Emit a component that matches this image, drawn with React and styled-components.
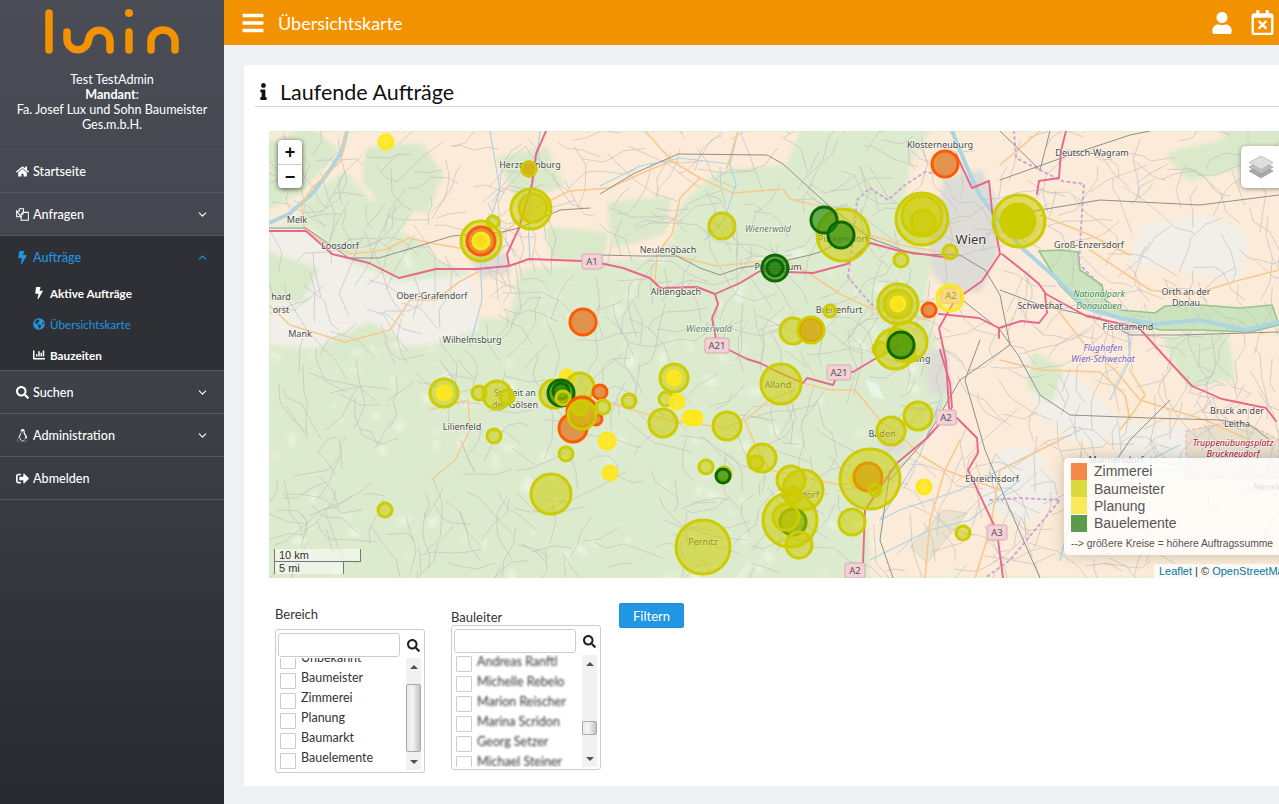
import React from "react";
import styled, { createGlobalStyle } from "styled-components";
import {
  FaHome,
  FaBolt,
  FaGlobeAmericas,
  FaChartBar,
  FaSearch,
  FaLinux,
  FaSignOutAlt,
  FaBars,
  FaUser,
  FaRegCalendarTimes,
  FaInfo,
} from "react-icons/fa";
import { ChevronDown, ChevronUp } from "lucide-react";

const GlobalStyle = createGlobalStyle`
  html, body {
    margin: 0;
    height: 100%;
    overflow: hidden;
    font-family: Lato, "Open Sans", sans-serif;
    color: #333;
  }
  * { box-sizing: border-box; }
`;

const Page = styled.div`
  display: grid;
  grid-template-columns: 224px 1fr;
  width: 1279px;
  height: 804px;
  overflow: hidden;
  background: #eef0f4;
`;

const Sidebar = styled.aside`
  background: linear-gradient(#4a4d55 0, #44474f 230px, #3c3e45 440px, #28292e 804px);
  color: #fff;
  font-size: 12.6px;
`;

const Brand = styled.div`
  height: 150px;
  padding-top: 7px;
  text-align: center;
  line-height: 15px;
  border-bottom: 1px solid #50535b;
  svg {
    display: block;
    margin: 0 auto 17px;
  }
  strong {
    font-weight: 700;
  }
`;

const NavRow = styled.div`
  display: flex;
  align-items: center;
  height: ${(p) => (p.$active ? 41 : 43)}px;
  padding: ${(p) => (p.$active ? "1px" : "0")} 16px 0;
  gap: 4px;
  color: ${(p) => (p.$active ? "#2196e3" : "#fff")};
  background: ${(p) => (p.$active ? "#2e3036" : "transparent")};
  border-bottom: ${(p) => (p.$active ? "0" : "1px solid #55575e")};
  font-weight: 500;
  > svg:first-child {
    width: 13px;
    height: 13px;
    flex: none;
  }
  span {
    flex: 1;
  }
`;

const Arrow = styled.div`
  display: flex;
  margin-right: -1px;
`;

const SubMenu = styled.div`
  background: #2e3036;
  border-bottom: 1px solid #55575e;
`;

const SubRow = styled.div`
  display: flex;
  align-items: center;
  height: 31px;
  padding-left: 33px;
  gap: 5px;
  font-size: 11.7px;
  color: ${(p) => (p.$active ? "#2196e3" : "#fff")};
  font-weight: ${(p) => (p.$active ? 400 : 700)};
  svg {
    width: 12px;
    height: 12px;
    flex: none;
  }
`;

const Content = styled.main`
  min-width: 0;
`;

const TopBar = styled.header`
  display: flex;
  align-items: center;
  height: 45px;
  padding: 0 4px 0 17px;
  background: #f39200;
  color: #fff;
  h1 {
    flex: 1;
    margin: 0 0 0 13px;
    font-size: 18px;
    font-weight: 400;
  }
`;

const TopIcons = styled.div`
  display: flex;
  align-items: center;
  gap: 17px;
`;

const Card = styled.section`
  width: 1100px;
  height: 721px;
  margin: 20px 0 0 20px;
  padding: 13px 0 0 0;
  background: #fff;
`;

const CardTitle = styled.div`
  display: flex;
  align-items: center;
  height: 29px;
  margin-left: 11px;
  border-bottom: 1px solid #d4d4d4;
  padding-bottom: 1px;
  h2 {
    margin: 0 0 0 8px;
    font-size: 21.5px;
    line-height: 28px;
    font-weight: 400;
    color: #111;
  }
`;

const MapBox = styled.div`
  position: relative;
  width: 1040px;
  height: 447px;
  margin: 24px 0 0 25px;
  overflow: hidden;
  background: #dcebcd;
  > svg {
    display: block;
  }
`;

const ZoomControl = styled.div`
  position: absolute;
  left: 9px;
  top: 9px;
  width: 24px;
  background: #fff;
  border-radius: 4px;
  box-shadow: 0 1px 5px rgba(0, 0, 0, 0.65);
`;

const ZoomButton = styled.div`
  height: 24px;
  text-align: center;
  font: 700 18px/24px "Liberation Sans", sans-serif;
  color: #111;
  & + & {
    border-top: 1px solid #ccc;
  }
`;

const LayersButton = styled.div`
  position: absolute;
  left: 972px;
  top: 15px;
  display: flex;
  align-items: center;
  width: 48px;
  height: 42px;
  padding-left: 7px;
  background: #fff;
  border-radius: 5px;
  box-shadow: 0 1px 5px rgba(0, 0, 0, 0.4);
`;

const Legend = styled.div`
  position: absolute;
  left: 795px;
  top: 327px;
  width: 240px;
  height: 97px;
  padding: 4.5px 7px;
  background: rgba(255, 255, 255, 0.8);
  border-radius: 5px;
  box-shadow: 0 0 15px rgba(0, 0, 0, 0.2);
  font-family: "Liberation Sans", Arial, sans-serif;
  color: #555;
`;

const LegendRow = styled.div`
  display: flex;
  align-items: center;
  height: 17.4px;
  font-size: 14px;
  i {
    width: 16px;
    height: 17px;
    margin-right: 7px;
    background: ${(p) => p.$color};
  }
`;

const LegendNote = styled.div`
  margin-top: 4px;
  font-size: 10.3px;
  line-height: 16px;
  white-space: nowrap;
`;

const Attribution = styled.div`
  position: absolute;
  left: 885px;
  bottom: 0;
  padding: 0 5px;
  font: 11px/14px "Liberation Sans", Arial, sans-serif;
  color: #333;
  background: rgba(255, 255, 255, 0.7);
  white-space: nowrap;
  b {
    font-weight: 400;
    color: #0078a8;
  }
`;

const ScaleStack = styled.div`
  position: absolute;
  left: 5px;
  bottom: 4px;
`;

const ScaleLine = styled.div`
  width: ${(p) => p.$width}px;
  height: 13px;
  padding-left: 4px;
  font: 11px/12px "Liberation Sans", Arial, sans-serif;
  color: #333;
  background: rgba(255, 255, 255, 0.5);
  border: 1px solid #777;
  border-top: ${(p) => (p.$flip ? "1px solid #777" : "0")};
  border-bottom: ${(p) => (p.$flip ? "0" : "1px solid #777")};
  margin-top: ${(p) => (p.$flip ? "-1px" : "0")};
`;

const Filters = styled.div`
  display: flex;
  align-items: flex-start;
  margin: 25px 0 0 31px;
`;

const FilterColumn = styled.div`
  width: 150px;
  margin-right: ${(p) => p.$gap}px;
  padding-top: ${(p) => p.$top}px;
  label {
    display: block;
    height: 18px;
    margin-bottom: ${(p) => p.$labelGap}px;
    font-size: 13px;
    line-height: 18px;
    color: #333;
  }
`;

const PickBox = styled.div`
  height: ${(p) => p.$height}px;
  border: 1px solid #ccc;
  border-radius: 3px;
  padding: 3px 3px 0 2px;
  overflow: hidden;
`;

const SearchRow = styled.div`
  display: flex;
  align-items: center;
  height: 24px;
  margin-right: 1px;
  gap: 7px;
  color: #222;
  svg {
    width: 13px;
    height: 13px;
    flex: none;
  }
`;

const SearchInput = styled.div`
  flex: 1;
  height: 24px;
  border: 1px solid #ccc;
  border-radius: 3px;
`;

const ListArea = styled.div`
  display: flex;
  height: 112px;
  margin-top: ${(p) => p.$top}px;
`;

const ItemClip = styled.div`
  flex: 1;
  overflow: hidden;
  padding-left: 2px;
`;

const Items = styled.div`
  margin-top: ${(p) => p.$offset}px;
`;

const Item = styled.div`
  display: flex;
  align-items: center;
  height: 20px;
  font-size: 12.5px;
  color: #333;
  span {
    margin-left: 5px;
    margin-bottom: 6px;
    filter: ${(p) => (p.$blur ? "blur(1px)" : "none")};
    white-space: nowrap;
  }
  i {
    width: 16px;
    height: 16px;
    flex: none;
    border: 1px solid #ccc;
    border-radius: 1px;
    background: #fff;
  }
`;

const ScrollTrack = styled.div`
  display: flex;
  flex-direction: column;
  width: 15px;
  background: #f1f1f1;
  font-size: 0;
`;

const ScrollEnd = styled.div`
  height: 17px;
  display: flex;
  align-items: center;
  justify-content: center;
  flex: none;
  &::before {
    content: "";
    border-left: 4px solid transparent;
    border-right: 4px solid transparent;
    border-${(p) => (p.$down ? "top" : "bottom")}: 4px solid #505050;
  }
`;

const ScrollGap = styled.div`
  flex: ${(p) => (p.$fill ? 1 : "none")};
  height: ${(p) => (p.$fill ? "auto" : `${p.$height}px`)};
`;

const ScrollThumb = styled.div`
  flex: none;
  height: ${(p) => p.$height}px;
  border: 1px solid #a8a8a8;
  border-radius: 2px;
  background: linear-gradient(90deg, #e8e8e8, #f4f4f4 40%, #c4c4c4);
`;

const FilterButton = styled.button`
  width: 65px;
  height: 25px;
  padding: 0;
  border: 1px solid #1e8ed8;
  border-radius: 2px;
  background: #2196e3;
  color: #fff;
  font: 400 13px Lato, sans-serif;
`;

// map drawing, all coordinates are page pixels (viewBox starts at the map corner)
const line = (pts) => "M" + pts.map((p) => p.join(" ")).join("L");

const FARMLAND = [
  [[352, 131], [800, 131], [786, 165], [720, 170], [700, 186], [680, 205], [672, 240], [650, 258], [600, 262], [520, 270], [509, 318], [476, 318], [470, 272], [440, 262], [420, 240], [400, 232], [420, 200], [370, 200], [345, 170]],
  [[930, 131], [1310, 131], [1310, 578], [870, 578], [868, 520], [900, 470], [950, 400], [935, 340], [925, 300], [932, 260], [905, 200], [910, 165]],
  [[269, 131], [352, 131], [345, 170], [312, 195], [296, 220], [269, 226]],
];

const GREYLAND = [
  [[269, 226], [310, 228], [350, 262], [400, 282], [470, 274], [480, 330], [430, 345], [340, 350], [269, 345]],
  [[1140, 225], [1210, 215], [1250, 235], [1240, 285], [1180, 270], [1130, 265]],
  [[1000, 445], [1040, 450], [1060, 500], [1020, 525], [980, 500]],
  [[1020, 355], [1080, 380], [1120, 420], [1100, 450], [1040, 420]],
  [[1110, 420], [1200, 430], [1180, 480], [1120, 470]],
];

const URBAN = [
  [[945, 180], [980, 172], [1000, 210], [995, 255], [980, 290], [952, 292], [935, 275], [930, 240], [940, 210]],
  [[925, 355], [945, 350], [950, 392], [932, 392]],
  [[472, 258], [505, 254], [508, 272], [482, 276]],
  [[880, 440], [905, 442], [900, 452], [884, 450]],
  [[1120, 322], [1135, 322], [1135, 332], [1120, 332]],
];

const FORESTS = [
  [[369, 150], [420, 146], [440, 175], [425, 210], [385, 205], [365, 180]],
  [[270, 145], [310, 131], [335, 150], [300, 190], [272, 205]],
  [[500, 160], [545, 150], [560, 185], [520, 200]],
  [[548, 230], [605, 235], [600, 262], [555, 256]],
  [[610, 205], [668, 200], [662, 232], [615, 245]],
  [[1170, 155], [1235, 140], [1240, 165], [1190, 178]],
  [[1166, 340], [1225, 335], [1232, 375], [1190, 385]],
  [[1035, 355], [1060, 370], [1050, 400], [1030, 385]],
  [[1225, 131], [1279, 131], [1279, 160], [1240, 165]],
  [[270, 255], [315, 270], [300, 300], [269, 296]],
  [[320, 350], [369, 325], [395, 340], [345, 356]],
];

const WATER = [
  { w: 4, d: [[952, 131], [966, 165], [979, 194], [1002, 225], [1022, 248], [1056, 278], [1086, 308], [1120, 318], [1156, 324], [1199, 320], [1246, 330], [1279, 322]] },
  { w: 4, d: [[269, 223], [289, 214], [312, 194], [330, 170], [342, 151], [347, 131]] },
  { w: 1.2, d: [[600, 186], [640, 166], [680, 158], [730, 164], [738, 131]] },
  { w: 1.2, d: [[730, 164], [736, 185], [724, 220], [705, 240]] },
  { w: 1.2, d: [[490, 131], [500, 190], [480, 250], [482, 300], [470, 345]] },
  { w: 1.2, d: [[540, 131], [528, 220], [530, 262]] },
  { w: 1.2, d: [[940, 400], [920, 455], [880, 520], [900, 510], [960, 490], [1020, 460], [1080, 430]] },
  { w: 1.2, d: [[1060, 560], [1070, 520], [1130, 470], [1180, 445]] },
  { w: 1.2, d: [[870, 560], [930, 530], [970, 520], [1020, 480]] },
  { w: 1.2, d: [[1110, 400], [1130, 360], [1128, 335]] },
];

const ORANGE_ROADS = [
  [[346, 131], [341, 161], [312, 188], [302, 204], [304, 228], [326, 244], [352, 254], [385, 250], [409, 238], [436, 244], [459, 248], [502, 234], [535, 208], [569, 191], [609, 188], [647, 171], [672, 161], [700, 178], [733, 193], [783, 189], [790, 199], [827, 208], [860, 232], [905, 246], [960, 255]],
  [[700, 178], [680, 198], [672, 234], [657, 254], [655, 281], [660, 290]],
  [[677, 256], [717, 266], [783, 259], [810, 274], [840, 294], [870, 308], [925, 320]],
  [[727, 168], [738, 131]],
  [[645, 131], [672, 161]],
  [[436, 300], [459, 282], [478, 272]],
  [[269, 305], [290, 325], [345, 342], [390, 330], [410, 300], [436, 300]],
  [[430, 410], [468, 400], [470, 430], [455, 460], [431, 480]],
  [[795, 390], [770, 400], [745, 420], [755, 445], [770, 470], [840, 485], [870, 480]],
  [[803, 383], [830, 390], [855, 390], [880, 420], [905, 440], [920, 455], [945, 470], [1000, 490]],
  [[600, 400], [660, 418], [725, 428], [745, 420]],
  [[1050, 300], [1085, 345], [1115, 370], [1140, 400], [1205, 420], [1250, 440]],
  [[1090, 250], [1150, 290], [1190, 295], [1240, 280], [1279, 270]],
  [[1000, 165], [1040, 131]],
  [[1040, 215], [1090, 235], [1130, 255]],
  [[1000, 360], [1040, 370], [1100, 372], [1125, 395], [1130, 420]],
  [[960, 440], [945, 470], [930, 520], [925, 578]],
  [[1060, 440], [1000, 470], [990, 530], [975, 578]],
  [[1130, 370], [1145, 395], [1135, 410], [1120, 430]],
];

const MOTORWAYS = [
  [[269, 231], [306, 231], [332, 254], [369, 263], [399, 278], [436, 269], [476, 269], [509, 266], [529, 259], [582, 261], [600, 263], [623, 268], [650, 278], [660, 288], [697, 287], [715, 294], [740, 283], [760, 271], [813, 273], [847, 264], [870, 243], [900, 251], [950, 258]],
  [[715, 294], [718, 304], [712, 318], [717, 344], [747, 359], [760, 363], [780, 373], [803, 383], [807, 378], [833, 385], [839, 372], [853, 372], [873, 360], [900, 345]],
  [[940, 350], [950, 383], [952, 407], [946, 417], [927, 438], [897, 463], [865, 510], [863, 563], [855, 570]],
  [[957, 418], [977, 438], [978, 453], [968, 470], [993, 523], [997, 532], [1003, 578]],
  [[1002, 254], [1026, 273], [1039, 284], [1046, 294], [1086, 316], [1139, 328], [1166, 358], [1192, 386], [1222, 399], [1266, 408], [1276, 421]],
  [[939, 314], [979, 318], [999, 328], [999, 338]],
  [[999, 328], [1021, 321], [1039, 323], [1047, 313], [1045, 294]],
  [[1066, 131], [1061, 151], [1059, 178], [1039, 181], [1037, 194]],
  [[956, 154], [972, 188], [989, 181], [992, 211], [1000, 254], [982, 281], [955, 300], [939, 328], [946, 361], [949, 408]],
  [[546, 131], [536, 154], [532, 184], [519, 228], [507, 254], [509, 266]],
];

const RAILWAYS = [
  [[269, 228], [306, 228], [349, 258], [379, 258], [452, 236], [502, 232], [519, 228], [560, 210], [590, 208]],
  [[600, 194], [633, 174], [678, 154], [767, 155], [783, 164], [827, 204], [870, 238], [913, 254], [960, 255], [985, 270]],
  [[600, 255], [640, 256], [677, 256], [700, 268], [720, 275], [740, 268], [780, 262], [810, 255], [820, 252], [850, 237]],
  [[1010, 215], [1100, 200], [1200, 205], [1279, 195]],
  [[1000, 180], [1070, 155], [1130, 135], [1150, 131]],
  [[1000, 290], [1040, 305], [1100, 318], [1130, 335], [1180, 335], [1279, 332]],
  [[950, 290], [1000, 330], [1018, 355], [1040, 395], [1070, 415], [1150, 418], [1220, 420], [1250, 425], [1270, 440]],
  [[985, 270], [1000, 295], [1010, 345], [960, 380], [925, 440], [890, 480]],
  [[1000, 131], [1040, 170], [1050, 131]],
  [[980, 340], [965, 380], [985, 450], [1010, 510], [1040, 578]],
  [[890, 470], [880, 540], [893, 578]],
  [[1170, 400], [1130, 440], [1110, 470]],
];

const BORDERS = [
  [[848, 277], [870, 303], [880, 310]],
  [[848, 277], [853, 240], [857, 200], [870, 188], [888, 200], [905, 185], [925, 172], [950, 175]],
  [[1014, 131], [1016, 158], [1062, 181], [1084, 184], [1082, 211], [1079, 264], [1100, 285]],
  [[990, 500], [1020, 498], [1060, 500], [1010, 560], [985, 578]],
];

const PARK = [[1039, 251], [1060, 250], [1078, 252], [1080, 270], [1102, 285], [1105, 300], [1120, 310], [1155, 313], [1165, 306], [1200, 305], [1240, 308], [1272, 305], [1279, 325], [1250, 332], [1200, 330], [1160, 330], [1120, 318], [1080, 305], [1060, 285]];

const seeded = (seed) => () => {
  seed = (seed * 16807) % 2147483647;
  return seed / 2147483647;
};

// little village roads: the real tiles have hundreds, a random walk looks close enough
const minorRoads = (() => {
  const rnd = seeded(4711);
  const out = [];
  for (let i = 0; i < 720; i++) {
    let x = 269 + rnd() * 1010;
    let y = 131 + rnd() * 447;
    let dir = rnd() * Math.PI * 2;
    const pts = [[x, y]];
    const steps = 2 + Math.floor(rnd() * 3);
    for (let s = 0; s < steps; s++) {
      dir += (rnd() - 0.5) * 1.6;
      const len = 8 + rnd() * 18;
      x += Math.cos(dir) * len;
      y += Math.sin(dir) * len;
      pts.push([Math.round(x), Math.round(y)]);
    }
    out.push(pts);
  }
  return out;
})();

const blobs = (() => {
  const rnd = seeded(90210);
  return Array.from({ length: 170 }, () => ({
    x: 269 + rnd() * 700,
    y: 250 + rnd() * 328,
    rx: 2 + rnd() * 7,
    ry: 1 + rnd() * 3,
    a: rnd() * 180,
  }));
})();

const LABELS = [
  ["Klosterneuburg", 940, 148], ["Deutsch-Wagram", 1092, 156], ["Herzogenburg", 530, 168], ["Melk", 297, 223],
  ["Loosdorf", 340, 249], ["Ober-Grafendorf", 432, 299], ["hard", 281, 300], ["orst", 281, 313], ["Mank", 300, 337],
  ["Wilhelmsburg", 472, 343], ["Neulengbach", 668, 253], ["Altlengbach", 676, 295], ["Purkersdorf", 843, 242],
  ["Pressbaum", 778, 270], ["Breitenfurt", 839, 313], ["Groß-Enzersdorf", 1089, 248], ["Schwechat", 1040, 309],
  ["Orth an der", 1186, 295], ["Donau", 1186, 306], ["Fischamend", 1128, 330], ["Bruck an der", 1237, 414],
  ["Leitha", 1237, 427], ["Alland", 778, 388], ["Baden", 882, 437], ["Mödling", 913, 362], ["Pernitz", 703, 545],
  ["Ebreichsdorf", 992, 482], ["Berndorf", 800, 498], ["Lilienfeld", 462, 430], ["St. Veit an", 515, 396],
  ["der Gölsen", 515, 408], ["Mannersdorf", 1116, 463], ["Neusiedl", 1272, 490],
];

const AREA_LABELS = [
  ["Wienerwald", 768, 232, "#5f7f62"], ["Wienerwald", 709, 332, "#5f7f62"],
  ["Nationalpark", 1099, 297, "#3d8a4a"], ["Donauauen", 1099, 309, "#3d8a4a"],
  ["Flughafen", 1103, 351, "#7a5bb8"], ["Wien-Schwechat", 1103, 362, "#7a5bb8"],
  ["Truppenübungsplatz", 1233, 446, "#a8123c"], ["Bruckneudorf", 1233, 457, "#a8123c"],
];

const SHIELDS = [
  ["A1", 592, 261], ["A21", 717, 345], ["A21", 839, 372], ["A2", 951, 295],
  ["A2", 946, 417], ["A2", 855, 570], ["A3", 997, 532],
];

const COLORS = {
  Z: { stroke: "#ff5a00", fill: "#e08a3e", o: 0.9 },
  B: { stroke: "#cccc00", fill: "#cccc00", o: 0.55 },
  P: { stroke: "#ffe81a", fill: "#ffe81a", o: 0.85 },
  Q: { stroke: "#ffe81a", fill: "#ffe81a", o: 0.45 },
  E: { stroke: "#0c6a00", fill: "#148000", o: 0.6 },
  S: { stroke: "#cccc00", fill: "#cccc00", o: 1 },
};

const MARKERS = [
  [386, 142, 7, "P"], [529, 169, 7, "Z"], [529, 169, 7, "B"], [531, 209, 20, "B"], [533, 208, 14, "B"],
  [493, 222, 6, "B"], [481, 241, 20, "B"], [481, 241, 14, "Z"], [481, 241, 8, "P"],
  [583, 322, 13, "Z"], [722, 226, 13, "B"], [945, 164, 13, "Z"],
  [843, 235, 26, "B"], [824, 220, 13, "E"], [841, 235, 13, "E"],
  [922, 219, 26, "B"], [922, 216, 20, "B"], [923, 222, 12, "B"],
  [1019, 221, 26, "B"], [1018, 221, 17, "S"], [901, 260, 7, "B"], [950, 252, 7, "B"],
  [775, 268, 13, "E"], [775, 268, 8, "E"], [898, 304, 20, "B"], [898, 304, 14, "B"], [898, 304, 7, "P"],
  [950, 298, 13, "Q"], [929, 310, 7, "Z"], [830, 311, 6, "B"],
  [793, 331, 13, "B"], [811, 330, 12, "Z"], [811, 330, 13, "B"],
  [907, 342, 20, "B"], [895, 349, 20, "B"], [880, 349, 7, "B"], [901, 345, 13, "E"],
  [781, 384, 20, "B"], [444, 393, 14, "B"], [444, 393, 7, "P"],
  [479, 393, 7, "B"], [497, 395, 14, "B"], [507, 397, 7, "B"],
  [567, 377, 7, "P"], [580, 387, 14, "B"], [554, 394, 14, "B"], [561, 393, 13, "E"], [561, 391, 8, "E"], [563, 398, 7, "B"],
  [600, 392, 7, "Z"], [596, 419, 6, "Z"], [573, 428, 14, "Z"], [582, 412, 15, "Z"], [582, 415, 14, "B"], [580, 408, 7, "B"],
  [603, 407, 7, "B"], [629, 401, 7, "B"], [607, 441, 8, "P"], [566, 454, 7, "B"], [494, 436, 7, "B"], [610, 473, 7, "P"],
  [551, 494, 20, "B"], [385, 510, 7, "B"],
  [674, 378, 14, "B"], [674, 378, 7, "P"], [666, 399, 7, "B"], [677, 402, 7, "P"], [663, 423, 14, "B"],
  [690, 418, 7, "P"], [695, 418, 7, "P"], [727, 426, 14, "B"], [918, 416, 14, "B"], [891, 431, 14, "B"],
  [762, 458, 14, "B"], [756, 463, 7, "B"], [706, 467, 7, "B"], [724, 474, 7, "B"], [723, 476, 7, "E"],
  [858, 479, 7, "P"], [868, 477, 14, "Z"], [870, 479, 30, "B"], [875, 490, 6, "B"],
  [924, 487, 7, "P"], [791, 480, 14, "B"], [803, 490, 20, "B"], [793, 495, 8, "B"],
  [793, 522, 13, "E"], [790, 520, 27, "B"], [786, 517, 13, "B"], [799, 545, 13, "B"], [852, 522, 13, "B"],
  [963, 533, 7, "B"], [703, 547, 27, "B"],
];

const MapSvg = () => (
  <svg width="1040" height="447" viewBox="269 131 1040 447">
    <defs>
      <filter id="soft" x="-5%" y="-5%" width="110%" height="110%">
        <feGaussianBlur stdDeviation="2" />
      </filter>
      <filter id="tile" x="-2%" y="-2%" width="104%" height="104%">
        <feGaussianBlur stdDeviation="0.35" />
      </filter>
    </defs>
    <rect x="269" y="131" width="1040" height="447" fill="#dcebcd" />
    <g filter="url(#soft)">
      {FARMLAND.map((p, i) => <path key={i} d={line(p) + "Z"} fill="#fcebd8" />)}
      {GREYLAND.map((p, i) => <path key={i} d={line(p) + "Z"} fill="#f1efe8" />)}
      {FORESTS.map((p, i) => <path key={i} d={line(p) + "Z"} fill="#d9e9c9" stroke="#d9e9c9" strokeWidth="6" strokeLinejoin="round" />)}
      {blobs.map((b, i) => (
        <ellipse key={i} cx={b.x} cy={b.y} rx={b.rx} ry={b.ry} fill="#edf4e2" transform={`rotate(${b.a} ${b.x} ${b.y})`} />
      ))}
      {URBAN.map((p, i) => <path key={i} d={line(p) + "Z"} fill="#dedcd7" stroke="#dedcd7" strokeWidth="4" strokeLinejoin="round" />)}
    </g>
    <path d="M910 547L943 510L967 513L927 563Z" fill="#ebe3cd" stroke="#e0cfc0" />
    <path d="M1186 431L1240 420L1279 440L1279 478L1186 478Z" fill="#e9e0cc" stroke="#e8a8b8" strokeDasharray="4 2" />
    <path d="M865 380L878 384L885 400L872 396Z" fill="#e3f7ea" />
    <path d={line(PARK) + "Z"} fill="#cbe4bd" stroke="#93c48d" strokeWidth="1.6" />
    <g fill="none" strokeLinejoin="round" strokeLinecap="round" filter="url(#tile)">
      {minorRoads.map((p, i) => <path key={i} d={line(p)} stroke="#c4c2be" strokeWidth="0.7" />)}
      {WATER.map((r, i) => <path key={i} d={line(r.d)} stroke="#aad5e3" strokeWidth={r.w} />)}
      {BORDERS.map((p, i) => <path key={i} d={line(p)} stroke="#cda6d4" strokeWidth="2" strokeDasharray="2 4" />)}
      {ORANGE_ROADS.map((p, i) => <path key={i} d={line(p)} stroke="#f7c98f" strokeWidth="1.6" />)}
      {RAILWAYS.map((p, i) => <path key={i} d={line(p)} stroke="#8f8f8d" strokeWidth="1" />)}
      {MOTORWAYS.map((p, i) => <path key={i} d={line(p)} stroke="#e8688c" strokeWidth="1.9" />)}
    </g>
    <g fontFamily="'Noto Sans', sans-serif" textAnchor="middle" stroke="#fff" strokeOpacity="0.6" strokeWidth="1.5">
      {LABELS.map(([t, x, y]) => (
        <text key={t + x} x={x} y={y} fontSize="9" fill="#4a4a4a" paintOrder="stroke">{t}</text>
      ))}
      <text x="971" y="244" fontSize="13" fill="#333" paintOrder="stroke">Wien</text>
      {AREA_LABELS.map(([t, x, y, c]) => (
        <text key={t + y} x={x} y={y} fontSize="8.8" fontStyle="italic" fill={c} paintOrder="stroke">{t}</text>
      ))}
    </g>
    {SHIELDS.map(([t, x, y]) => (
      <g key={t + x}>
        <rect x={x - (t.length > 2 ? 12 : 10)} y={y - 7} width={t.length > 2 ? 24 : 20} height="15" rx="2" fill="#f3cfd6" stroke="#d8a8b4" />
        <text x={x} y={y + 4} fontSize="9.5" textAnchor="middle" fontFamily="'Noto Sans', sans-serif" fill="#555">{t}</text>
      </g>
    ))}
    {MARKERS.map(([x, y, r, k], i) => (
      <circle key={i} cx={x} cy={y} r={r} fill={COLORS[k].fill} fillOpacity={COLORS[k].o} stroke={COLORS[k].stroke} strokeWidth="3" />
    ))}
  </svg>
);

const LuminLogo = () => (
  <svg width="140" height="48" viewBox="42 7 140 48" fill="none" stroke="#f39200" strokeWidth="7.5" strokeLinecap="round">
    <path d="M49 13V50" />
    <path d="M67 32V39a10.750 10.750 0 0 0 21.500 0V41a10.750 10.750 0 0 1 21.500 0V50" />
    <path d="M129 32V50" />
    <path d="M151 50V41a12 11 0 0 1 24 0V50" />
    <circle cx="129" cy="13" r="4" fill="#f39200" stroke="none" />
  </svg>
);

const FilesIcon = () => (
  <svg viewBox="0 0 14 14" fill="none" stroke="currentColor" strokeWidth="1.1">
    <path d="M3.500 .7H8V4.700M5.500 9.500H.7V3.500Z" />
    <path d="M3.500 .7V3.500H.7" />
    <path d="M7.500 4.700H13.300V13.300H5.500V6.700Z" />
    <path d="M7.500 4.700V6.700H5.500" />
  </svg>
);

const LayersIcon = () => (
  <svg width="26" height="26" viewBox="0 0 26 26">
    <path d="M1 17L13 11L25 17L13 24Z" fill="#a8a8a8" stroke="#8e8e8e" strokeWidth="0.6" />
    <path d="M1 13L13 7L25 13L13 20Z" fill="#bdbdbd" stroke="#8e8e8e" strokeWidth="0.6" />
    <path d="M1 8.500L13 2L25 8.500L13 15.500Z" fill="#dedede" stroke="#a4a4a4" strokeWidth="0.6" />
  </svg>
);

const CheckList = ({ items, offset, blur }) => (
  <ItemClip>
    <Items $offset={offset}>
      {items.map((name) => (
        <Item key={name} $blur={blur}>
          <i />
          <span>{name}</span>
        </Item>
      ))}
    </Items>
  </ItemClip>
);

const Scrollbar = ({ before, thumb }) => (
  <ScrollTrack>
    <ScrollEnd />
    <ScrollGap $height={before} />
    <ScrollThumb $height={thumb} />
    <ScrollGap $fill />
    <ScrollEnd $down />
  </ScrollTrack>
);

const App = () => (
  <Page>
    <GlobalStyle />
    <Sidebar>
      <Brand>
        <LuminLogo />
        <div>Test TestAdmin</div>
        <div><strong>Mandant</strong>:</div>
        <div>Fa. Josef Lux und Sohn Baumeister</div>
        <div>Ges.m.b.H.</div>
      </Brand>
      <NavRow><FaHome /><span>Startseite</span></NavRow>
      <NavRow><FilesIcon /><span>Anfragen</span><Arrow><ChevronDown size={13} /></Arrow></NavRow>
      <NavRow $active><FaBolt /><span>Aufträge</span><Arrow><ChevronUp size={13} /></Arrow></NavRow>
      <SubMenu>
        <SubRow><FaBolt /><span>Aktive Aufträge</span></SubRow>
        <SubRow $active><FaGlobeAmericas /><span>Übersichtskarte</span></SubRow>
        <SubRow><FaChartBar /><span>Bauzeiten</span></SubRow>
      </SubMenu>
      <NavRow><FaSearch /><span>Suchen</span><Arrow><ChevronDown size={13} /></Arrow></NavRow>
      <NavRow><FaLinux /><span>Administration</span><Arrow><ChevronDown size={13} /></Arrow></NavRow>
      <NavRow><FaSignOutAlt /><span>Abmelden</span></NavRow>
    </Sidebar>
    <Content>
      <TopBar>
        <FaBars size={24} />
        <h1>Übersichtskarte</h1>
        <TopIcons>
          <FaUser size={22} />
          <FaRegCalendarTimes size={25} />
        </TopIcons>
      </TopBar>
      <Card>
        <CardTitle>
          <FaInfo size={17} color="#111" />
          <h2>Laufende Aufträge</h2>
        </CardTitle>
        <MapBox>
          <MapSvg />
          <ZoomControl>
            <ZoomButton>+</ZoomButton>
            <ZoomButton>−</ZoomButton>
          </ZoomControl>
          <LayersButton><LayersIcon /></LayersButton>
          <ScaleStack>
            <ScaleLine $width={87}>10 km</ScaleLine>
            <ScaleLine $width={70} $flip>5 mi</ScaleLine>
          </ScaleStack>
          <Legend>
            <LegendRow $color="#f6874a"><i />Zimmerei</LegendRow>
            <LegendRow $color="#dcd93f"><i />Baumeister</LegendRow>
            <LegendRow $color="#f9e95c"><i />Planung</LegendRow>
            <LegendRow $color="#5c9a4c"><i />Bauelemente</LegendRow>
            <LegendNote>--&gt; größere Kreise = höhere Auftragssumme</LegendNote>
          </Legend>
          <Attribution><b>Leaflet</b> | © <b>OpenStreetMap</b> contributors</Attribution>
        </MapBox>
        <Filters>
          <FilterColumn $gap={26} $top={2} $labelGap={6}>
            <label>Bereich</label>
            <PickBox $height={144}>
              <SearchRow><SearchInput /><FaSearch /></SearchRow>
              <ListArea $top={1}>
                <CheckList offset={-7.5} items={["Unbekannt", "Baumeister", "Zimmerei", "Planung", "Baumarkt", "Bauelemente"]} />
                <Scrollbar before={9} thumb={68} />
              </ListArea>
            </PickBox>
          </FilterColumn>
          <FilterColumn $gap={18} $top={5} $labelGap={-1}>
            <label>Bauleiter</label>
            <PickBox $height={145}>
              <SearchRow><SearchInput /><FaSearch /></SearchRow>
              <ListArea $top={2}>
                <CheckList blur offset={-1} items={["Andreas Ranftl", "Michelle Rebelo", "Marion Reischer", "Marina Scridon", "Georg Setzer", "Michael Steiner"]} />
                <Scrollbar before={49} thumb={14} />
              </ListArea>
            </PickBox>
          </FilterColumn>
          <FilterButton>Filtern</FilterButton>
        </Filters>
      </Card>
    </Content>
  </Page>
);

export default App;
